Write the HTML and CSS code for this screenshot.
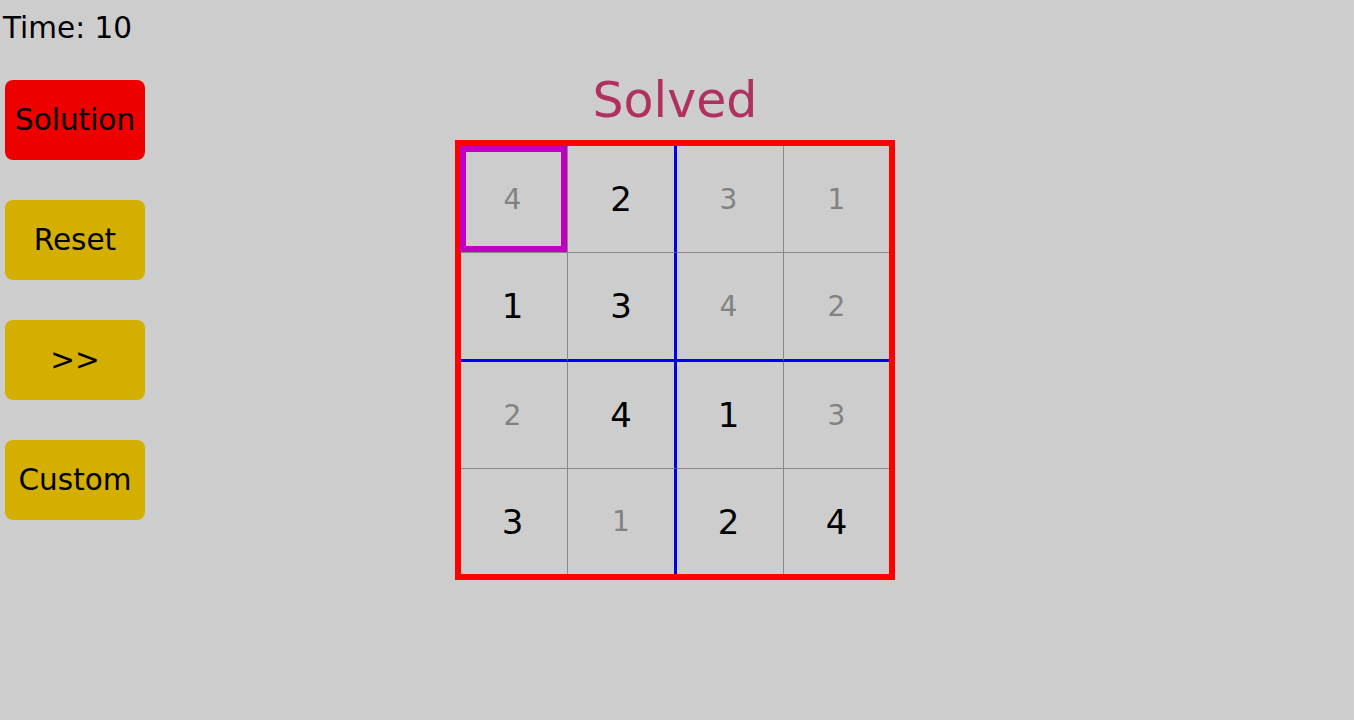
FILE: index.html
```html
<!DOCTYPE html>
<html>
<head>
<meta charset="utf-8">
<link rel="stylesheet" href="styles.css">
</head>
<body>
<div class="app">
  <aside class="sidebar">
    <div class="time">Time: 10</div>
    <button class="btn btn-red">Solution</button>
    <button class="btn">Reset</button>
    <button class="btn">&gt;&gt;</button>
    <button class="btn">Custom</button>
  </aside>
  <main class="main">
    <div class="puzzle">
      <h1 class="status">Solved</h1>
      <div class="board">
        <div class="cell c1"><span class="hint">4</span><div class="cursor"></div></div>
        <div class="cell c2"><span class="given">2</span></div>
        <div class="cell c3"><span class="hint">3</span></div>
        <div class="cell c4"><span class="hint">1</span></div>
        <div class="cell c1 r2"><span class="given">1</span></div>
        <div class="cell c2 r2"><span class="given">3</span></div>
        <div class="cell c3 r2"><span class="hint">4</span></div>
        <div class="cell c4 r2"><span class="hint">2</span></div>
        <div class="cell c1"><span class="hint">2</span></div>
        <div class="cell c2"><span class="given">4</span></div>
        <div class="cell c3"><span class="given">1</span></div>
        <div class="cell c4"><span class="hint">3</span></div>
        <div class="cell c1 r4"><span class="given">3</span></div>
        <div class="cell c2 r4"><span class="hint">1</span></div>
        <div class="cell c3 r4"><span class="given">2</span></div>
        <div class="cell c4 r4"><span class="given">4</span></div>
      </div>
    </div>
  </main>
</div>
</body>
</html>
```
FILE: styles.css
```css
html, body {
  margin: 0;
  padding: 0;
}
body {
  background: #cdcdcd;
  font-family: "DejaVu Sans", sans-serif;
  color: #000;
  width: 1354px;
  height: 720px;
  overflow: hidden;
}
.app {
  display: flex;
}
.sidebar {
  width: 145px;
  display: flex;
  flex-direction: column;
  padding-top: 11px;
}
.time {
  font-size: 29.5px;
  line-height: 34px;
  margin-left: 3px;
  margin-bottom: 35px;
  white-space: nowrap;
}
.btn {
  width: 140px;
  height: 80px;
  margin-left: 5px;
  margin-bottom: 40px;
  border: none;
  border-radius: 8px;
  background: #d4af00;
  font-family: "DejaVu Sans", sans-serif;
  font-size: 29.5px;
  color: #000;
  padding: 0;
  display: flex;
  align-items: center;
  justify-content: center;
}
.btn-red {
  background: #ee0000;
}
.main {
  flex: 1;
  padding-left: 310px;
}
.puzzle {
  display: inline-flex;
  flex-direction: column;
  align-items: center;
}
.status {
  margin: 73px 0 11px 0;
  font-size: 49px;
  line-height: 56px;
  font-weight: normal;
  color: #b03060;
}
.board {
  border: 6px solid #ff0000;
  display: grid;
  grid-template-columns: 107px 109px 107px 105px;
  grid-template-rows: 107px 109px 107px 105px;
}
.cell {
  position: relative;
  box-sizing: border-box;
  border-right: 1px solid #878787;
  border-bottom: 1px solid #878787;
  display: flex;
  align-items: center;
  justify-content: center;
}
.cell.c1 { padding-right: 3px; }
.cell.c3 { padding-right: 3px; }
.cell.c2 { border-right: 3px solid #0000ee; }
.cell.c4 { border-right: none; }
.cell.r2 { border-bottom: 3px solid #0000ee; }
.cell.r4 { border-bottom: none; }
.given { font-size: 34px; color: #000; }
.hint { font-size: 28px; color: #828282; }
.cursor {
  position: absolute;
  left: -1px;
  top: 0;
  width: 107px;
  height: 106px;
  box-sizing: border-box;
  border: 6px solid #c000c0;
}
```
